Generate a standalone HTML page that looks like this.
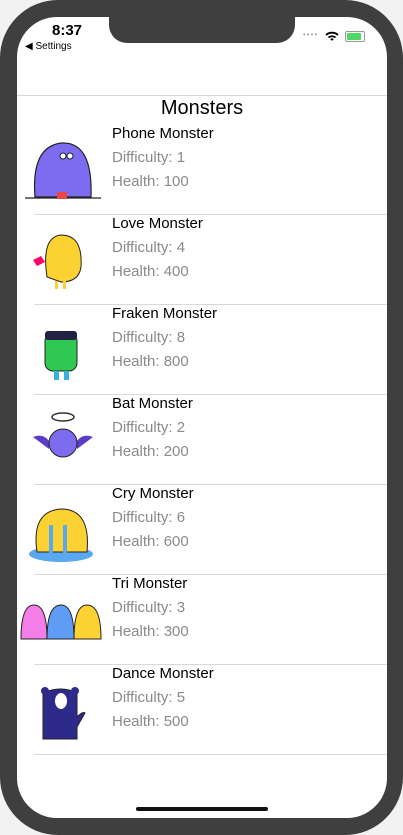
<!DOCTYPE html>
<html><head><style>
body{margin:0;width:403px;height:835px;background:#f2f2f2;position:relative;overflow:hidden;font-family:"Liberation Sans",sans-serif}
.dev{position:absolute;left:0;top:0;width:403px;height:835px;background:#3f3f3f;border-radius:58px}
.scr{position:absolute;left:17px;top:17px;width:370px;height:801px;background:#fff;border-radius:40px;overflow:hidden}
.notch{position:absolute;left:92px;top:0;width:186px;height:26px;background:#3f3f3f;border-radius:0 0 18px 18px}
.t{position:absolute;color:#000}
.sep{position:absolute;height:1px;background:#d8d8d8;right:0}
.nm{position:absolute;left:95px;font-size:15px;color:#000}
.g{position:absolute;left:95px;font-size:15px;color:#8a8a8a}
.ic{position:absolute;left:4px;width:80px;height:70px}
.home{position:absolute;left:119px;bottom:7px;width:132px;height:4px;border-radius:2px;background:#111}
</style></head><body>
<div class="dev"><div class="scr">
<div class="notch"></div>
<div class="t" style="left:35px;top:5px;font-size:15px;font-weight:bold">8:37</div>
<div class="t" style="left:8px;top:24px;font-size:10px">◀ Settings</div>
<div class="t" style="left:286px;top:13px;font-size:8px;color:#aaa;letter-spacing:1px">••••</div>
<svg style="position:absolute;left:308px;top:14px" width="14" height="11" viewBox="0 0 14 11"><path d="M1 4a9 9 0 0 1 12 0M3.5 6.5a5.5 5.5 0 0 1 7 0M5.8 8.8a2 2 0 0 1 2.4 0" stroke="#000" stroke-width="1.8" fill="none"/></svg>
<div style="position:absolute;left:328px;top:14px;width:18px;height:9px;border:1px solid #999;border-radius:2px"><div style="margin:1px;width:14px;height:7px;background:#4cd964;border-radius:1px"></div></div>
<div class="sep" style="left:0;top:78px"></div>
<div class="t" style="left:0;width:370px;text-align:center;top:80px;font-size:20px">Monsters</div>

<div class="nm" style="top:108px">Phone Monster</div><div class="g" style="top:132px">Difficulty: 1</div><div class="g" style="top:156px">Health: 100</div>
<svg class="ic" style="top:120px" viewBox="0 0 80 70"><path d="M14 60 Q10 10 40 6 Q72 4 70 60Z" fill="#7d6cf0" stroke="#222" stroke-width="1.2"/><line x1="4" y1="61" x2="80" y2="61" stroke="#222" stroke-width="1.2"/><rect x="36" y="55" width="10" height="7" fill="#e44"/><circle cx="42" cy="19" r="3" fill="#fff" stroke="#222"/><circle cx="49" cy="19" r="3" fill="#fff" stroke="#222"/></svg>
<div class="sep" style="left:17px;top:197px"></div>

<div class="nm" style="top:198px">Love Monster</div><div class="g" style="top:222px">Difficulty: 4</div><div class="g" style="top:246px">Health: 400</div>
<svg class="ic" style="top:210px" viewBox="0 0 80 70"><path d="M26 50 Q20 10 40 8 Q62 8 60 40 Q58 55 40 55Z" fill="#fcd232" stroke="#222"/><path d="M12 33 l8 -4 l4 6 l-8 4z" fill="#f06"/><rect x="34" y="54" width="3" height="8" fill="#fcd232"/><rect x="42" y="54" width="3" height="8" fill="#fcd232"/></svg>
<div class="sep" style="left:17px;top:287px"></div>

<div class="nm" style="top:288px">Fraken Monster</div><div class="g" style="top:312px">Difficulty: 8</div><div class="g" style="top:336px">Health: 800</div>
<svg class="ic" style="top:300px" viewBox="0 0 80 70"><rect x="24" y="16" width="32" height="38" rx="8" fill="#2fc852" stroke="#222"/><rect x="24" y="14" width="32" height="9" rx="3" fill="#224"/><rect x="33" y="54" width="5" height="9" fill="#3ab0e0"/><rect x="43" y="54" width="5" height="9" fill="#3ab0e0"/></svg>
<div class="sep" style="left:17px;top:377px"></div>

<div class="nm" style="top:378px">Bat Monster</div><div class="g" style="top:402px">Difficulty: 2</div><div class="g" style="top:426px">Health: 200</div>
<svg class="ic" style="top:390px" viewBox="0 0 80 70"><ellipse cx="42" cy="10" rx="11" ry="4" fill="none" stroke="#333" stroke-width="1.5"/><path d="M12 30 Q22 26 28 34 L28 42 Q20 36 12 30Z M72 30 Q62 26 56 34 L56 42 Q64 36 72 30Z" fill="#5a3cc8"/><circle cx="42" cy="36" r="14" fill="#7d6cf0" stroke="#222"/></svg>
<div class="sep" style="left:17px;top:467px"></div>

<div class="nm" style="top:468px">Cry Monster</div><div class="g" style="top:492px">Difficulty: 6</div><div class="g" style="top:516px">Health: 600</div>
<svg class="ic" style="top:480px" viewBox="0 0 80 70"><ellipse cx="40" cy="57" rx="32" ry="8" fill="#5aa8f0"/><path d="M16 55 Q10 14 40 12 Q70 12 66 55Z" fill="#fcd232" stroke="#222"/><rect x="28" y="28" width="4" height="28" fill="#5aa8f0"/><rect x="42" y="28" width="4" height="28" fill="#5aa8f0"/></svg>
<div class="sep" style="left:17px;top:557px"></div>

<div class="nm" style="top:558px">Tri Monster</div><div class="g" style="top:582px">Difficulty: 3</div><div class="g" style="top:606px">Health: 300</div>
<svg class="ic" style="top:570px;left:2px;width:84px" viewBox="0 0 84 70"><path d="M2 52 Q2 18 15 18 Q28 18 28 52Z" fill="#f47de8" stroke="#222"/><path d="M28 52 Q28 18 42 18 Q55 18 55 52Z" fill="#5f9cf5" stroke="#222"/><path d="M55 52 Q55 18 68 18 Q82 18 82 52Z" fill="#fcd232" stroke="#222"/></svg>
<div class="sep" style="left:17px;top:647px"></div>

<div class="nm" style="top:648px">Dance Monster</div><div class="g" style="top:672px">Difficulty: 5</div><div class="g" style="top:696px">Health: 500</div>
<svg class="ic" style="top:660px" viewBox="0 0 80 70"><path d="M22 62 L22 16 Q40 8 56 16 L56 40 Q62 34 64 36 L56 50 L56 62Z" fill="#2e2a8c" stroke="#222"/><circle cx="24" cy="14" r="4" fill="#2e2a8c"/><circle cx="54" cy="14" r="4" fill="#2e2a8c"/><ellipse cx="40" cy="24" rx="6" ry="8" fill="#fff"/></svg>
<div class="sep" style="left:17px;top:737px"></div>

<div class="home"></div>
</div></div>
</body></html>
